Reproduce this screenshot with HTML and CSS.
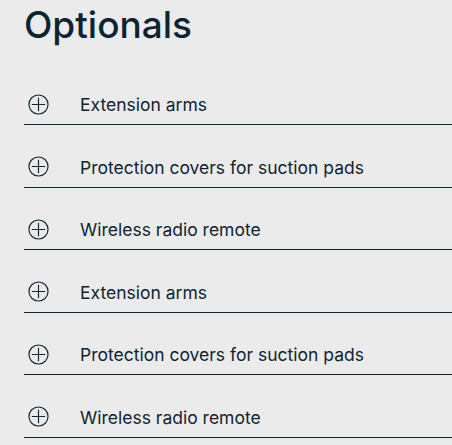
FILE: index.html
```html
<!DOCTYPE html>
<html lang="en">
<head>
<meta charset="utf-8">
<link rel="stylesheet" href="styles.css">
</head>
<body>
<section class="optionals">
  <h1 class="title">Optionals</h1>
  <ul class="list">
    <li class="row"><svg class="icon" viewBox="0 0 22 22"><circle cx="11" cy="11" r="10" /><path d="M11 4v14M4 11h14" /></svg><span class="label">Extension arms</span></li>
    <li class="row"><svg class="icon" viewBox="0 0 22 22"><circle cx="11" cy="11" r="10" /><path d="M11 4v14M4 11h14" /></svg><span class="label">Protection covers for suction pads</span></li>
    <li class="row"><svg class="icon" viewBox="0 0 22 22"><circle cx="11" cy="11" r="10" /><path d="M11 4v14M4 11h14" /></svg><span class="label">Wireless radio remote</span></li>
    <li class="row"><svg class="icon" viewBox="0 0 22 22"><circle cx="11" cy="11" r="10" /><path d="M11 4v14M4 11h14" /></svg><span class="label">Extension arms</span></li>
    <li class="row"><svg class="icon" viewBox="0 0 22 22"><circle cx="11" cy="11" r="10" /><path d="M11 4v14M4 11h14" /></svg><span class="label">Protection covers for suction pads</span></li>
    <li class="row"><svg class="icon" viewBox="0 0 22 22"><circle cx="11" cy="11" r="10" /><path d="M11 4v14M4 11h14" /></svg><span class="label">Wireless radio remote</span></li>
  </ul>
</section>
</body>
</html>
```
FILE: styles.css
```css
html, body {
  margin: 0;
  padding: 0;
  background: #ebebeb;
}
body {
  font-family: Inter, "Noto Sans", sans-serif;
  color: #0f2431;
}
.optionals {
  padding-left: 24px;
  overflow: hidden;
}
.title {
  margin: 0;
  font-size: 37px;
  font-weight: 500;
  line-height: 50px;
  letter-spacing: 0;
  height: 62.5px;
}
.list {
  list-style: none;
  margin: 0;
  padding: 0;
}
.row {
  display: flex;
  align-items: center;
  height: 20px;
  padding: 31.5px 0 10px 4px;
  border-bottom: 1px solid #0f2431;
}
.icon {
  width: 21px;
  height: 21px;
  fill: none;
  stroke: #0f2431;
  stroke-width: 1.2;
  flex: none;
}
.label {
  margin-left: 31px;
  padding-top: 2px;
  font-size: 17.5px;
  line-height: 20px;
}
```
